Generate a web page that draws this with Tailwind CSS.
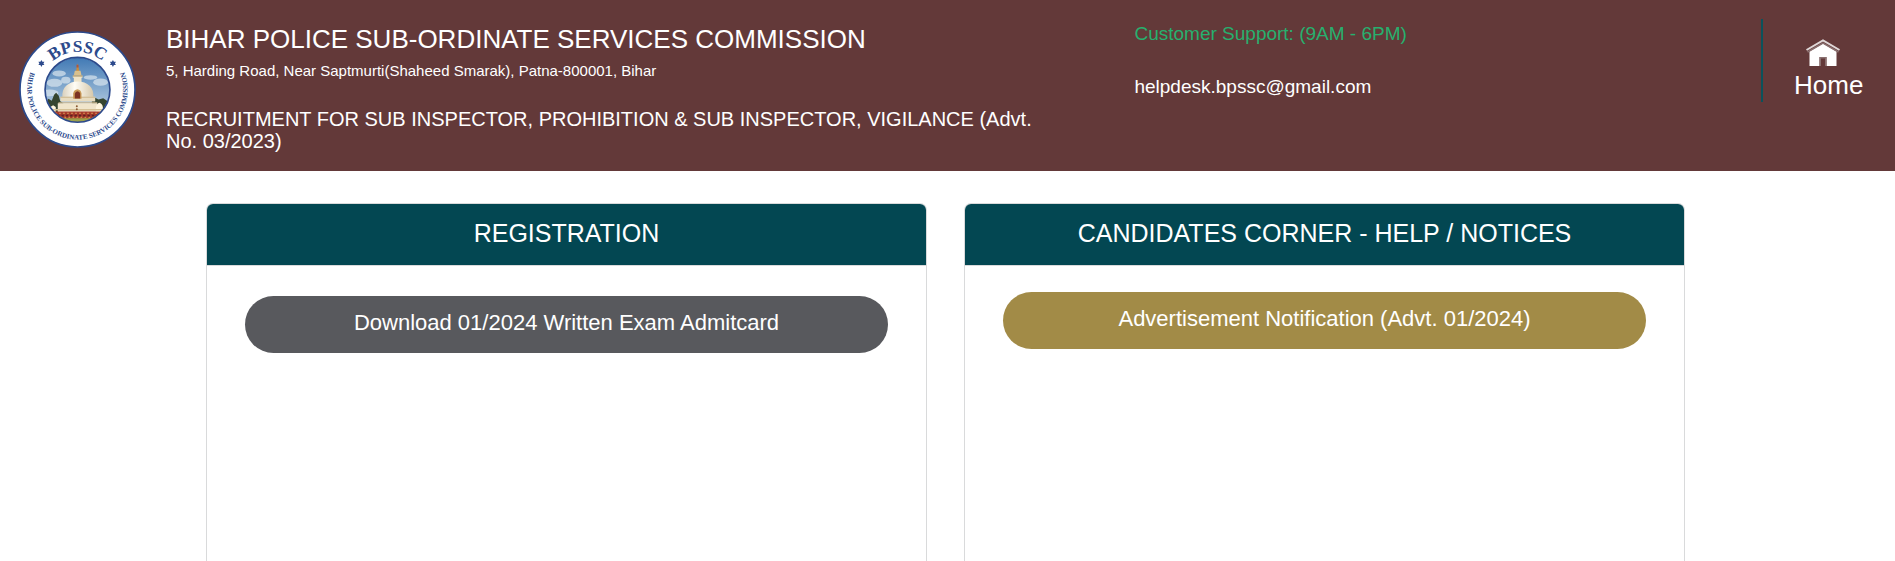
<!doctype html>
<html lang="en">
 <head>
    <meta charset="UTF-8" />
    <meta name="viewport" content="width=device-width, initial-scale=1.0" />
    <title>Bihar Police Sub-ordinate Services Commission</title>
    <script src="https://cdn.jsdelivr.net/npm/@tailwindcss/browser@4"></script>
 </head>
 <body class="flex min-h-screen flex-col bg-white font-['Liberation_Sans',Arial,sans-serif]">
    <!-- Header with logo, titles, support and home link -->
    <header class="flex items-start bg-[#633939] text-white pb-[19px]">
        <div class="w-[166px] shrink-0 pl-[19px] pt-[31px]">
            <svg class="size-[117px]" viewBox="58 93 350 350" role="img" aria-label="BPSSC logo">
                <defs>
                    <path id="topArc" d="M121 268a112 112 0 0 1 224 0" />
                    <path id="bottomArc" d="M103 193a150 150 0 1 0 260 0" />
                    <clipPath id="photo"><circle cx="233" cy="269" r="96" /></clipPath>
                    <linearGradient id="sky" x1="0" y1="0" x2="0" y2="1">
                        <stop offset="0" stop-color="#3f78b4" />
                        <stop offset="0.7" stop-color="#a9c4dc" />
                    </linearGradient>
                    <linearGradient id="dome" x1="0" y1="0" x2="1" y2="0">
                        <stop offset="0" stop-color="#d9d0bd" />
                        <stop offset="0.4" stop-color="#fffdf5" />
                        <stop offset="1" stop-color="#d6c8ab" />
                    </linearGradient>
                </defs>
                <circle cx="233" cy="268" r="172" fill="#fff" stroke="#2c4a8c" stroke-width="5" />
                <g clip-path="url(#photo)">
                    <path fill="url(#sky)" d="M130 170h206v200H130z" />
                    <g fill="#dbe5ee" opacity="0.7">
                        <ellipse cx="178" cy="220" rx="20" ry="9" />
                        <ellipse cx="164" cy="248" rx="24" ry="12" />
                        <ellipse cx="198" cy="240" rx="14" ry="10" />
                        <ellipse cx="272" cy="232" rx="20" ry="7" />
                        <ellipse cx="302" cy="246" rx="22" ry="11" />
                        <ellipse cx="150" cy="278" rx="26" ry="10" />
                    </g>
                    <path fill="#35452f" d="M136 310l10-14 10 6 7-18 6-6 8 9 4 15 10 8v30h-55zM276 300l8-8 12 6 14-4 20 14v32h-54z" />
                    <!-- stupa -->
                    <path fill="#c98a3a" d="M230 206l3-16 4 16 2 12h-11z" />
                    <path fill="#b0573d" d="M230 194h6v8h-6z" />
                    <path fill="#d9c08c" d="M225 212h17l3 14h-23z" />
                    <path fill="#efe4c8" d="M219 226h29v7h-3v13h-23v-13h-3z" />
                    <path fill="#a98f5c" d="M219 226h29v3h-29z" />
                    <path fill="url(#dome)" d="M188 292c-4-30 18-48 46-48s50 18 46 48z" />
                    <path fill="#e8dcc0" d="M182 290h104v14H182z" />
                    <path fill="#cbb78d" d="M182 290h104v3H182zM176 306h116v4H176z" />
                    <path fill="#f0e5cb" d="M174 309h118v28H174z" />
                    <path fill="#c99a57" d="M220 296v-16q2-12 13-13 10 1 12 13v16z" />
                    <path fill="#7c3323" d="M225 295v-14q2-8 8-8 7 0 8 8v14z" />
                    <path fill="#fff6df" d="M288 340v-18q2-12 11-14 9 3 10 14v18zM152 336v-16l8-5 8 5v16z" />
                    <path fill="#d5c196" d="M150 326h160v5H150z" />
                    <circle cx="231" cy="318" r="3" fill="#8a5a33" />
                    <circle cx="231" cy="327" r="3" fill="#8a5a33" />
                    <path fill="#a5382b" d="M150 334h164v14l-10 24H170z" />
                    <path stroke="#e0a45a" stroke-width="3" stroke-dasharray="5 7" d="M166 339h140M182 351h108" />
                    <path stroke="#5d2420" stroke-width="5" stroke-dasharray="7 6" d="M172 346h124" />
                    <path fill="#9aa04a" d="M176 354h114l-20 20h-74z" />
                </g>
                <circle cx="233" cy="269" r="97" fill="none" stroke="#2c4a8c" stroke-width="5" />
                <g fill="#2c4a8c" font-family="'Liberation Serif', serif" font-weight="bold" text-anchor="middle">
                    <text font-size="52"><textPath href="#topArc" startOffset="50%">BPSSC</textPath></text>
                    <text font-size="21"><textPath href="#bottomArc" startOffset="50%">BIHAR POLICE SUB-ORDINATE SERVICES COMMISSION</textPath></text>
                </g>
                <path id="star" fill="#2c4a8c" d="M125 180l3 5 6 0-3 5 3 5-6 0-3 6-3-6-6 0 3-5-3-5 6 0z" />
                <use href="#star" x="214" />
            </svg>
        </div>
        <div class="w-[51%] pr-[72px] pt-[25px]">
            <h1 class="text-[26px] leading-[28px]">BIHAR POLICE SUB-ORDINATE SERVICES COMMISSION</h1>
            <p class="mt-2 text-[15px] leading-[20px]">5, Harding Road, Near Saptmurti(Shaheed Smarak), Patna-800001, Bihar</p>
            <h2 class="mt-[27px] text-[20px] leading-[22px]">RECRUITMENT FOR SUB INSPECTOR, PROHIBITION &amp; SUB INSPECTOR, VIGILANCE (Advt. No. 03/2023)</h2>
        </div>
        <div class="flex-1 pl-0.5 pt-[22px] text-[19px] leading-[24px]">
            <p class="text-[#27b06e]">Customer Support: (9AM - 6PM)</p>
            <a href="mailto:helpdesk.bpssc@gmail.com" class="mt-[29px] block">helpdesk.bpssc@gmail.com</a>
        </div>
        <nav class="mt-[19px] w-[134px] h-[83px] shrink-0 border-l-2 border-[#0b525b] pl-[31px] pt-[19px]">
            <a href="#" class="block text-[26px] leading-[28px]">
                <svg class="ml-3 mb-[5px] w-[34px] h-[28px]" viewBox="0 0 34 28" aria-hidden="true">
                    <path fill="#fff" d="M3.500 28V13.500L17 5.500l13.500 8V28H20.500v-9h-7v9z" />
                    <path fill="#8a7070" d="M13.500 19h7v9h-1.500v-7.500h-4V28h-1.500z" />
                    <path fill="none" stroke="#8a7070" stroke-width="1.500" d="M1.500 14L17 5l15.500 9" />
                    <path fill="none" stroke="#e0d8d8" stroke-width="2" d="M.5 12L17 2.300 33.500 12" />
                </svg>
                Home
            </a>
        </nav>
    </header>

    <!-- Cards -->
    <main class="grid flex-1 grid-cols-2 gap-[37px] pl-[206px] pr-[210px] pt-8">
        <section class="rounded-t-[7px] border border-b-0 border-[#d9dadb]">
            <h2 class="rounded-t-md border-b border-[#d9dadb] bg-[#034752] pt-[15px] pb-[18px] text-center text-[25px] leading-[28px] text-white">REGISTRATION</h2>
            <div class="px-[38px] pt-[30px]">
                <button type="button" class="block w-full rounded-full bg-[#58595d] pt-[13px] pb-[16px] text-[22px] leading-[28px] text-white">Download 01/2024 Written Exam Admitcard</button>
            </div>
        </section>
        <section class="rounded-t-[7px] border border-b-0 border-[#d9dadb]">
            <h2 class="rounded-t-md border-b border-[#d9dadb] bg-[#034752] pt-[15px] pb-[18px] text-center text-[25px] leading-[28px] text-white">CANDIDATES CORNER - HELP / NOTICES</h2>
            <div class="px-[38px] pt-[26px]">
                <button type="button" class="block w-full rounded-full bg-[#a28b47] pt-[13px] pb-[16px] text-[22px] leading-[28px] text-white">Advertisement Notification (Advt. 01/2024)</button>
            </div>
        </section>
    </main>
 </body>
</html>
